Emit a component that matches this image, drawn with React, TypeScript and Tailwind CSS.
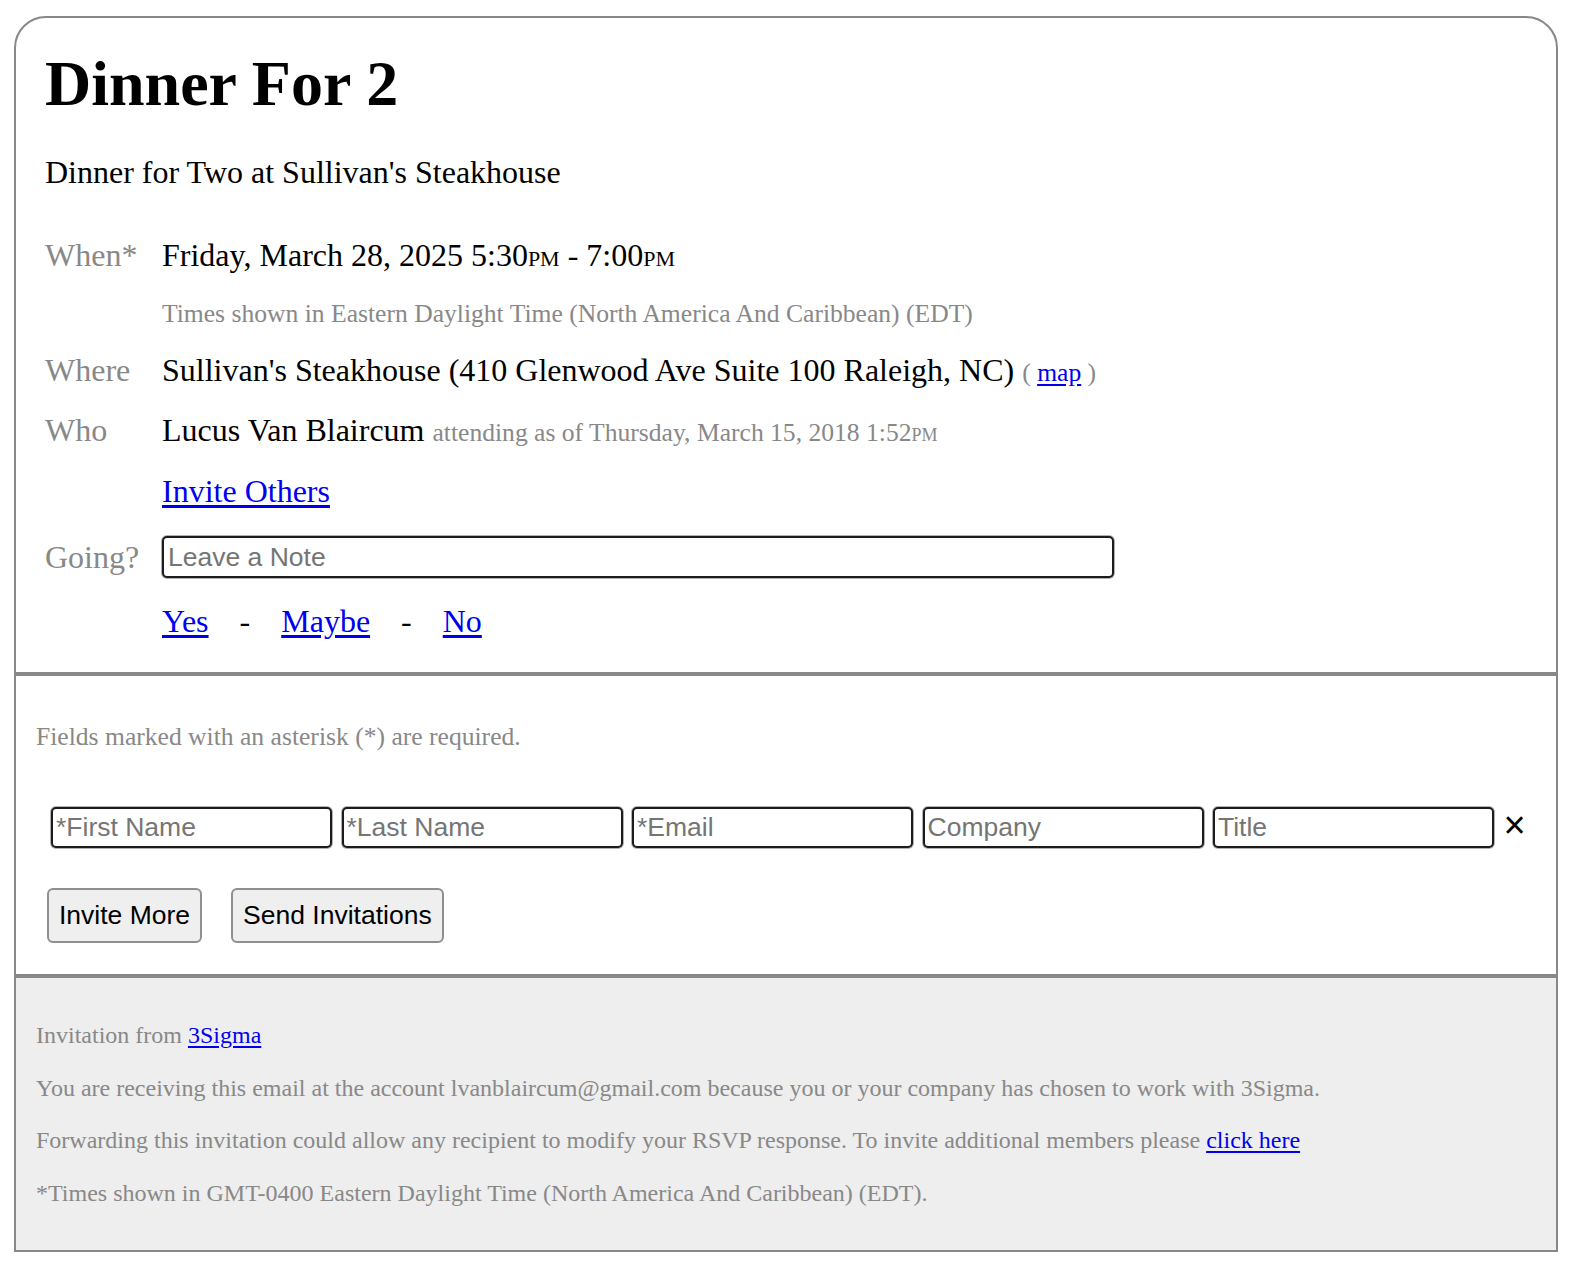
import React from "react";

const serif = "font-['Liberation_Serif','Times_New_Roman',serif]";
const sans = "font-['Liberation_Sans',Arial,sans-serif]";

function Label({ children }: { children: React.ReactNode }) {
  return <div className="w-[117px] shrink-0 text-[32px] leading-[40px] text-[#888888]">{children}</div>;
}

function Link({ children }: { children: React.ReactNode }) {
  return (
    <a href="#" className="text-[#0000ee] underline underline-offset-[3px]">
      {children}
    </a>
  );
}

export default function App() {
  const inputCls = `w-[281px] h-[41px] border-2 border-[#1c1c1c] rounded-[5px] shadow-[0_0_0_1px_rgba(0,0,0,0.3)] px-[3px] text-[26.5px] ${sans} text-black placeholder:text-[#757575] bg-white outline-none`;
  return (
    <div className={`bg-white min-h-[1286px] pt-[16px] pl-[14px] ${serif} text-black`}>
      <div className="w-[1544px] border-2 border-[#888888] rounded-t-[32px] overflow-hidden">
        {/* Event section */}
        <div className="pl-[29px] pt-[34px] pb-[31px]">
          <h1 className="text-[64px] leading-[64px] font-bold">Dinner For 2</h1>
          <p className="mt-[36px] text-[32px] leading-[40px]">Dinner for Two at Sullivan's Steakhouse</p>

          <div className="mt-[43px] flex h-[40px]">
            <Label>When*</Label>
            <div className="text-[32px] leading-[40px]">
              Friday, March 28, 2025 5:30<span className="[font-variant-caps:small-caps]">pm</span> - 7:00
              <span className="[font-variant-caps:small-caps]">pm</span>
            </div>
          </div>
          <div className="mt-[23px] pl-[117px] text-[25.6px] leading-[32px] text-[#888888]">
            Times shown in Eastern Daylight Time (North America And Caribbean) (EDT)
          </div>

          <div className="mt-[20px] flex h-[40px]">
            <Label>Where</Label>
            <div className="text-[32px] leading-[40px]">
              Sullivan's Steakhouse (410 Glenwood Ave Suite 100 Raleigh, NC){" "}
              <span className="text-[25.6px] leading-none text-[#888888]">
                ( <Link>map</Link> )
              </span>
            </div>
          </div>

          <div className="mt-[20px] flex h-[40px]">
            <Label>Who</Label>
            <div className="text-[32px] leading-[40px]">
              Lucus Van Blaircum{" "}
              <span className="text-[25.6px] leading-none text-[#888888]">
                attending as of Thursday, March 15, 2018 1:52<span className="[font-variant-caps:small-caps]">pm</span>
              </span>
            </div>
          </div>

          <div className="mt-[21px] pl-[117px] text-[32px] leading-[40px] h-[40px]">
            <Link>Invite Others</Link>
          </div>

          <div className="mt-[25px] flex items-center h-[42px]">
            <Label>Going?</Label>
            <input
              placeholder="Leave a Note"
              className={`w-[952px] h-[42px] border-2 border-[#1c1c1c] rounded-[5px] shadow-[0_0_0_1px_rgba(0,0,0,0.3)] px-[4px] text-[26.5px] ${sans} text-black placeholder:text-[#757575] bg-white outline-none`}
            />
          </div>

          <div className="mt-[23px] pl-[117px] flex text-[32px] leading-[40px] h-[40px]">
            <Link>Yes</Link>
            <span className="mx-[31px]">-</span>
            <Link>Maybe</Link>
            <span className="mx-[31px]">-</span>
            <Link>No</Link>
          </div>
        </div>

        <div className="h-[4px] bg-[#888888]" />

        {/* Invite section */}
        <div className="pl-[20px] pt-[45px] pb-[31px]">
          <p className="text-[25.6px] leading-[32px] text-[#888888]">Fields marked with an asterisk (*) are required.</p>
          <div className="mt-[54px] ml-[15px] flex items-center gap-[9.5px] h-[41px]">
            <input placeholder="*First Name" className={inputCls} />
            <input placeholder="*Last Name" className={inputCls} />
            <input placeholder="*Email" className={inputCls} />
            <input placeholder="Company" className={inputCls} />
            <input placeholder="Title" className={inputCls} />
            <span className={`${sans} text-[38px] leading-none text-black mb-[6px]`}>×</span>
          </div>
          <div className="mt-[40px] ml-[11px] flex gap-[29px]">
            <button className={`h-[55px] px-[10px] bg-[#efefef] border-2 border-[#8f8f8f] rounded-[6px] text-[26.5px] ${sans} text-black`}>
              Invite More
            </button>
            <button className={`h-[55px] px-[10px] bg-[#efefef] border-2 border-[#8f8f8f] rounded-[6px] text-[26.5px] ${sans} text-black`}>
              Send Invitations
            </button>
          </div>
        </div>

        <div className="h-[4px] bg-[#888888]" />

        {/* Footer */}
        <div className="bg-[#eeeeee] pl-[20px] pt-[31px] pb-[31px] text-[24px] leading-[52.5px] text-[#888888]">
          <p>
            Invitation from <Link>3Sigma</Link>
          </p>
          <p>
            You are receiving this email at the account lvanblaircum@gmail.com because you or your company has chosen to
            work with 3Sigma.
          </p>
          <p>
            Forwarding this invitation could allow any recipient to modify your RSVP response. To invite additional members
            please <Link>click here</Link>
          </p>
          <p>*Times shown in GMT-0400 Eastern Daylight Time (North America And Caribbean) (EDT).</p>
        </div>
      </div>
    </div>
  );
}
